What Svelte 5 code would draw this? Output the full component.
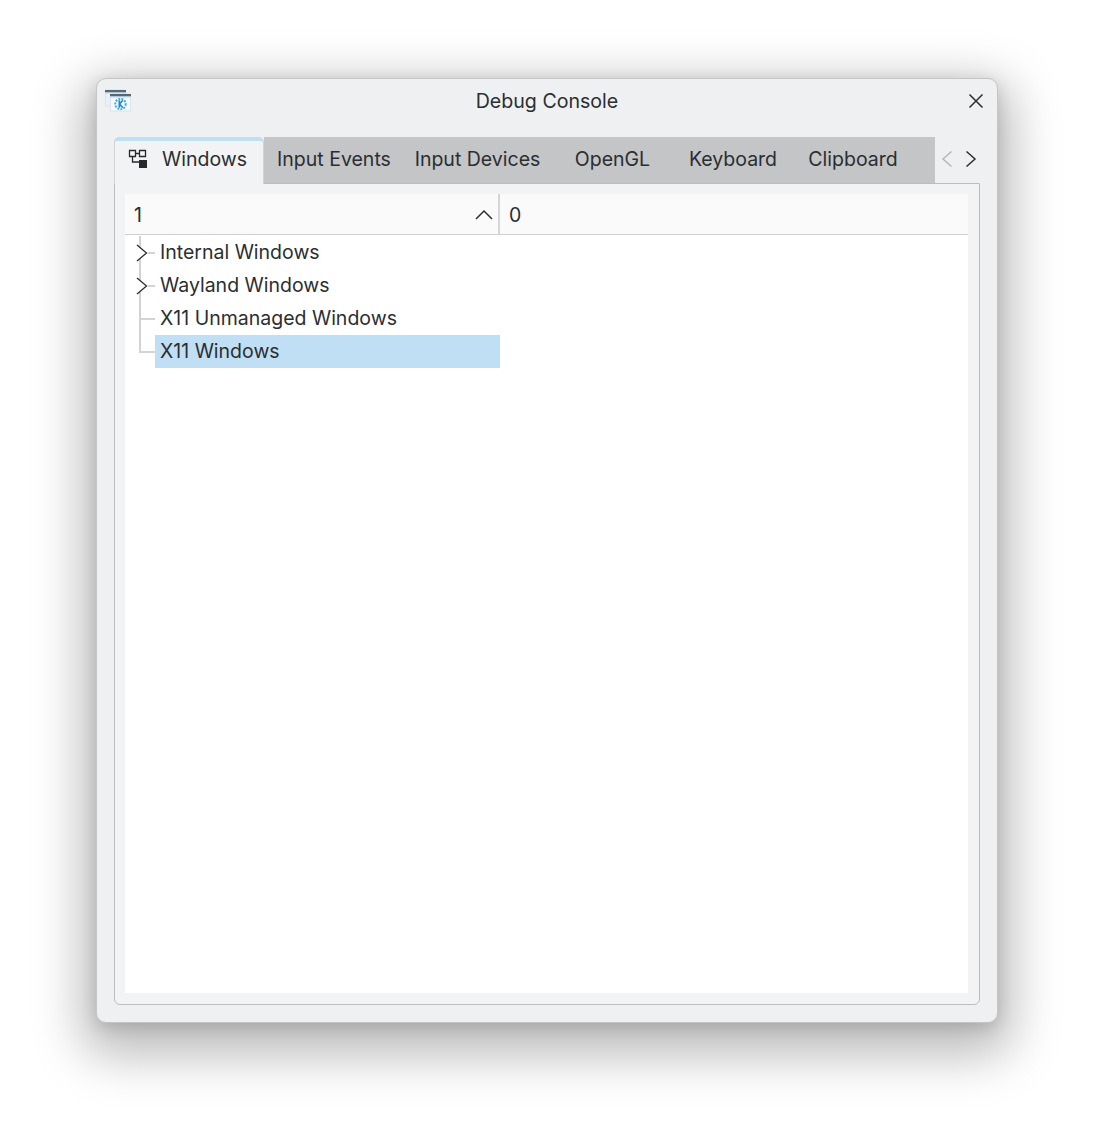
<script>
  const tabs = [
    { label: 'Input Events', w: 140 },
    { label: 'Input Devices', w: 147 },
    { label: 'OpenGL', w: 123 },
    { label: 'Keyboard', w: 118 },
    { label: 'Clipboard', w: 122 }
  ];
  const rows = [
    { label: 'Internal Windows', kind: 'branch' },
    { label: 'Wayland Windows', kind: 'branch' },
    { label: 'X11 Unmanaged Windows', kind: 'mid' },
    { label: 'X11 Windows', kind: 'last', selected: true }
  ];
</script>

<div class="page">
  <div class="window">
    <header class="titlebar">
      <svg class="appicon" width="28" height="28" viewBox="0 0 28 28">
        <rect x="0.500" y="4" width="20" height="16" fill="#e6f1f9" stroke="#d5dde3" stroke-width=".7"/>
        <rect x="0" y="4" width="21" height="2.500" fill="#566875"/>
        <rect x="0" y="6.500" width="21" height="1" fill="#bcdcf0"/>
        <rect x="5.500" y="8" width="20" height="17" fill="#f3f9fd" stroke="#d5dde3" stroke-width=".7"/>
        <rect x="5" y="8" width="21" height="2.500" fill="#566875"/>
        <rect x="5" y="10.500" width="21" height="1" fill="#bcdcf0"/>
        <circle cx="15.500" cy="18" r="5.200" fill="none" stroke="#3daee9" stroke-width="2" stroke-dasharray="1.900 1.200"/>
        <path d="M14.300 14.300v7.400M17.800 14.300l-3.300 3.700 3.300 3.700" fill="none" stroke="#1d85d3" stroke-width="1.600"/>
      </svg>
      <span class="title">Debug Console</span>
      <svg class="close" width="16" height="16" viewBox="0 0 16 16">
        <path d="M1.500 1.500l13 13M14.500 1.500l-13 13" stroke="#2b2e31" stroke-width="1.500" fill="none"/>
      </svg>
    </header>

    <div class="tabwidget">
      <div class="tabbar">
        <div class="tab active">
          <svg width="20" height="20" viewBox="0 0 20 20">
            <path d="M1.500 1.500h6v6h-6zM11.500 1.500h6v6h-6z" fill="#f4f5f6" stroke="#26292c" stroke-width="1.300"/>
            <path d="M7.500 4.500h4M4.500 7.500v5.500h7" fill="none" stroke="#26292c" stroke-width="1.300"/>
            <rect x="11" y="11" width="8" height="8" fill="#26292c"/>
          </svg>
          <span>Windows</span>
        </div>
        <div class="inactive">
          {#each tabs as tab}
            <div class="tab" style="width: {tab.w}px">{tab.label}</div>
          {/each}
        </div>
        <div class="scrollers">
          <svg width="12" height="18" viewBox="0 0 12 18"><path d="M10.500 1.500L2 9l8.500 7.500" fill="none" stroke="#b4b7b9" stroke-width="1.500"/></svg>
          <svg width="12" height="18" viewBox="0 0 12 18"><path d="M1.500 1.500L10 9l-8.500 7.500" fill="none" stroke="#2b2e31" stroke-width="1.500"/></svg>
        </div>
      </div>

      <div class="panel">
        <div class="tree">
          <div class="head">
            <div class="col first">
              <span>1</span>
              <svg width="18" height="11" viewBox="0 0 18 11"><path d="M1 10L9 2l8 8" fill="none" stroke="#2b2e31" stroke-width="1.500"/></svg>
            </div>
            <div class="col second"><span>0</span></div>
          </div>
          <div class="rows">
            {#each rows as row}
              <div class="row">
                <div class="gutter {row.kind}">
                  {#if row.kind === 'branch'}
                    <svg class="arrow" width="12" height="18" viewBox="0 0 12 18"><path d="M1 1l9.500 8L1 17" fill="#fff" stroke="#2b2e31" stroke-width="1.300"/></svg>
                  {/if}
                </div>
                <div class="label" class:selected={row.selected}>{row.label}</div>
              </div>
            {/each}
          </div>
        </div>
      </div>
    </div>
  </div>
</div>

<style>
  :global(body) {
    margin: 0;
    background: #fff;
  }
  .page {
    height: 1137px;
    padding: 78px 97px 0 96px;
    box-sizing: border-box;
    font-family: Inter, "Liberation Sans", sans-serif;
    font-size: 19.500px;
    color: #2b2e31;
    overflow: hidden;
  }
  .window {
    width: 902px;
    height: 945px;
    box-sizing: border-box;
    background: #eff0f1;
    border: 1px solid #c4c5c6;
    border-radius: 10px;
    box-shadow: 0 18px 50px 14px rgba(0, 0, 0, 0.27), 0 4px 16px rgba(0, 0, 0, 0.14);
    display: flex;
    flex-direction: column;
    padding: 0 17px 17px;
  }
  .titlebar {
    height: 44px;
    flex: none;
    display: flex;
    align-items: center;
    justify-content: space-between;
    position: relative;
    margin: 0 -11px 0 -9px;
  }
  .appicon { margin-top: -2px; }
  .title {
    position: absolute;
    left: 0;
    right: 2px;
    text-align: center;
    pointer-events: none;
    font-size: 19.600px;
  }
  .close { margin-right: 7px; }
  .tabwidget {
    flex: 1;
    margin-top: 14px;
    display: flex;
    flex-direction: column;
    min-height: 0;
  }
  .tabbar {
    height: 46px;
    flex: none;
    display: flex;
    position: relative;
    z-index: 1;
  }
  .tab {
    display: flex;
    align-items: center;
    justify-content: center;
    white-space: nowrap;
    padding-bottom: 2px;
    box-sizing: border-box;
  }
  .active {
    width: 150px;
    background: #f2f3f4;
    border: 1px solid #d1d2d3;
    border-top: 4px solid #bfdff3;
    border-bottom: none;
    border-radius: 5px 5px 0 0;
    height: 47px;
    gap: 14px;
    padding: 0 16px 8px 13px;
    justify-content: flex-start;
  }
  .active svg { flex: none; }
  .inactive {
    display: flex;
    background: #c4c5c7;
    width: 671px;
  }
  .scrollers {
    flex: 1;
    display: flex;
    align-items: center;
    justify-content: space-between;
    padding: 0 3px 2px 6px;
    box-sizing: border-box;
  }
  .panel {
    flex: 1;
    min-height: 0;
    background: #f2f3f4;
    border: 1px solid #bcbdbe;
    border-radius: 0 0 6px 6px;
    padding: 10px 11px 11px 10px;
    display: flex;
  }
  .tree {
    flex: 1;
    background: #fff;
    display: flex;
    flex-direction: column;
  }
  .head {
    height: 40px;
    flex: none;
    display: flex;
    background: #fafafa;
    border-bottom: 1px solid #cfd0d1;
  }
  .col {
    display: flex;
    align-items: center;
    box-sizing: border-box;
  }
  .col span { margin-top: 2px; }
  .first {
    width: 375px;
    justify-content: space-between;
    padding: 0 5px 0 9px;
    border-right: 2px solid #d4d5d6;
  }
  .second { flex: 1; padding-left: 10px; }
  .second span { margin-left: -1px; }
  .rows { padding-top: 1px; }
  .row {
    display: flex;
    height: 33px;
  }
  .gutter {
    width: 30px;
    flex: none;
    position: relative;
  }
  .gutter::before {
    content: "";
    position: absolute;
    left: 14px;
    top: 0;
    bottom: 0;
    width: 2px;
    background: #d2d3d4;
  }
  .gutter::after {
    content: "";
    position: absolute;
    left: 14px;
    right: 0;
    top: 16px;
    height: 2px;
    background: #d2d3d4;
  }
  .gutter.last::before { bottom: 15px; }
  .gutter.branch::after { left: 23px; right: 0; }
  .arrow {
    position: absolute;
    left: 11px;
    top: 8px;
  }
  .label {
    width: 345px;
    box-sizing: border-box;
    padding-left: 5px;
    line-height: 33px;
    height: 33px;
    white-space: nowrap;
  }
  .selected { background: #c0dff4; }
</style>
